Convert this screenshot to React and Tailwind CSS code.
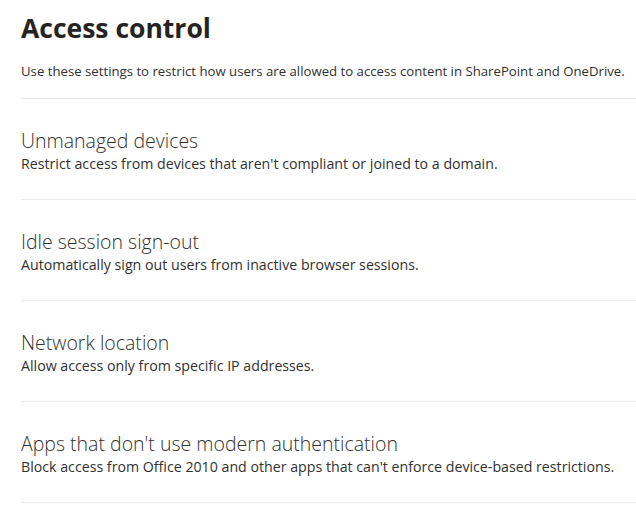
const sections = [
  {
    title: 'Unmanaged devices',
    desc: "Restrict access from devices that aren't compliant or joined to a domain.",
  },
  {
    title: 'Idle session sign-out',
    desc: 'Automatically sign out users from inactive browser sessions.',
  },
  {
    title: 'Network location',
    desc: 'Allow access only from specific IP addresses.',
  },
  {
    title: "Apps that don't use modern authentication",
    desc: "Block access from Office 2010 and other apps that can't enforce device-based restrictions.",
  },
]

export default function App() {
  return (
    <div className="min-h-screen bg-white pl-[21px] text-[#323130] font-['Open_Sans',sans-serif]">
      <h1 className="pt-[8px] text-[26.5px] leading-[40px] font-bold text-[#252423]">Access control</h1>
      <p className="mt-[14px] pb-[18px] text-[13.2px] leading-[18px]">
        Use these settings to restrict how users are allowed to access content in SharePoint and OneDrive.
      </p>
      <div className="border-t border-[#edebe9]">
        {sections.map(s => (
          <div key={s.title} className="border-b border-[#edebe9] pt-[28px] pb-[25px]">
            <h2 className="text-[19.5px] leading-[28px] font-light">{s.title}</h2>
            <p className="-mt-[1px] text-[14.2px] leading-[20px]">{s.desc}</p>
          </div>
        ))}
      </div>
    </div>
  )
}
